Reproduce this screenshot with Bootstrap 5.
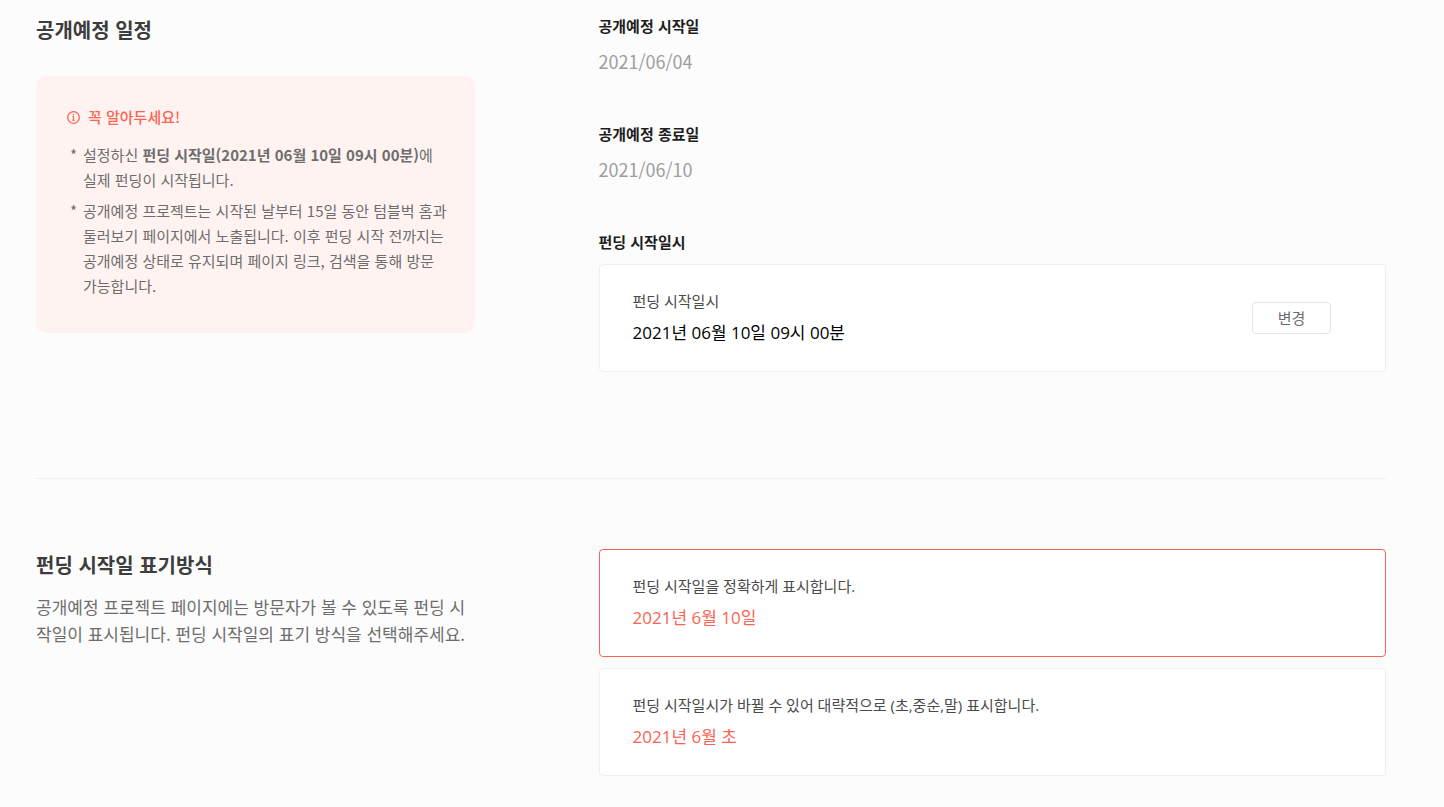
<!DOCTYPE html>
<html lang="ko">
<head>
<meta charset="utf-8">
<meta name="viewport" content="width=device-width, initial-scale=1">
<title>공개예정 일정</title>
<link href="https://cdn.jsdelivr.net/npm/bootstrap@5.3.0/dist/css/bootstrap.min.css" rel="stylesheet">
<style>
  :root { --accent: #fa6454; }
  body { background: #fcfcfc; color: #3d3d3d; font-family: "Noto Sans CJK KR", sans-serif; font-size: 15px; line-height: 24px; }
  .page { padding: 14px 58px 31px 36px; }
  .side { padding-right: 124px; }
  .section-title { font-size: 20px; line-height: 32px; font-weight: 700; color: #3d3d3d; }
  .notice { margin-top: 30px; padding: 29px 18px 35px 31px; background: #fff3f2; border-radius: 10px; color: #6d6d6d; word-break: keep-all; }
  .notice-title { color: var(--accent); font-size: 15px; line-height: 24px; font-weight: 500; gap: 8px; margin-bottom: 13px; }
  .notice-list { gap: 6px; line-height: 25px; }
  .notice-list li { padding-left: 16px; position: relative; }
  .notice-list li::before { content: "*"; position: absolute; left: 3px; }
  .field-label { font-size: 15px; line-height: 24px; font-weight: 700; color: #1e1e1e; margin-bottom: 10px; }
  .field-date { font-size: 18px; line-height: 26px; color: #9e9e9e; margin-bottom: 48px; }
  .panel { background: #fff; border: 1px solid #efefef; border-radius: 4px; padding: 24px 54px 24px 33px; font-family: "Open Sans", "Noto Sans CJK KR", sans-serif; }
  .panel-text { color: #4a4a4a; margin-bottom: 6px; }
  .panel-date { font-size: 17px; line-height: 28px; color: #000; }
  .change-btn { width: 79px; height: 32px; padding: 0; font-size: 15px; line-height: 24px; background: #fff; border: 1px solid #e4e4e4; border-radius: 4px; color: #6d6d6d; }
  .divider { margin: 106px 0 70px; border-top: 1px solid #f0f0f0; opacity: 1; }
  .description { font-size: 17px; line-height: 27px; color: #6d6d6d; margin-top: 12px; padding-right: 4px; }
  .choices { gap: 11px; }
  .choice { cursor: pointer; position: relative; }
  .choice .panel-date { color: var(--accent); }
  .choice:has(input:checked) { border-color: var(--accent); }
</style>
</head>
<body>
<main class="page">
  <section class="row g-0">
    <div class="col-5 side">
      <h2 class="section-title mb-0">공개예정 일정</h2>
      <aside class="notice">
        <h3 class="notice-title d-flex align-items-center">
          <svg width="13" height="13" viewBox="0 0 13 13" fill="none" stroke="currentColor" aria-hidden="true">
            <circle cx="6.5" cy="6.5" r="5.8" stroke-width="1.3"/>
            <path d="M5.3 5.7h1.2v3.4M5.1 9.3h2.8" stroke-width="1.1"/>
            <circle cx="6.5" cy="3.7" r=".8" fill="currentColor" stroke="none"/>
          </svg>
          <span>꼭 알아두세요!</span>
        </h3>
        <ul class="notice-list list-unstyled d-flex flex-column mb-0">
          <li>설정하신 <strong>펀딩 시작일(2021년 06월 10일 09시 00분)</strong>에 실제 펀딩이 시작됩니다.</li>
          <li>공개예정 프로젝트는 시작된 날부터 15일 동안 텀블벅 홈과 둘러보기 페이지에서 노출됩니다. 이후 펀딩 시작 전까지는 공개예정 상태로 유지되며 페이지 링크, 검색을 통해 방문 가능합니다.</li>
        </ul>
      </aside>
    </div>
    <div class="col-7">
      <h3 class="field-label">공개예정 시작일</h3>
      <p class="field-date">2021/06/04</p>
      <h3 class="field-label">공개예정 종료일</h3>
      <p class="field-date">2021/06/10</p>
      <h3 class="field-label">펀딩 시작일시</h3>
      <div class="panel d-flex align-items-center justify-content-between">
        <div>
          <p class="panel-text">펀딩 시작일시</p>
          <p class="panel-date mb-0">2021년 06월 10일 09시 00분</p>
        </div>
        <button type="button" class="btn change-btn">변경</button>
      </div>
    </div>
  </section>

  <hr class="divider">

  <section class="row g-0">
    <div class="col-5 side">
      <h2 class="section-title mb-0">펀딩 시작일 표기방식</h2>
      <p class="description mb-0">공개예정 프로젝트 페이지에는 방문자가 볼 수 있도록 펀딩 시작일이 표시됩니다. 펀딩 시작일의 표기 방식을 선택해주세요.</p>
    </div>
    <div class="col-7 d-flex flex-column choices">
      <label class="panel choice d-block">
        <input type="radio" class="visually-hidden" name="dateFormat" value="exact" checked>
        <span class="panel-text d-block">펀딩 시작일을 정확하게 표시합니다.</span>
        <span class="panel-date d-block">2021년 6월 10일</span>
      </label>
      <label class="panel choice d-block">
        <input type="radio" class="visually-hidden" name="dateFormat" value="rough">
        <span class="panel-text d-block">펀딩 시작일시가 바뀔 수 있어 대략적으로 (초,중순,말) 표시합니다.</span>
        <span class="panel-date d-block">2021년 6월 초</span>
      </label>
    </div>
  </section>
</main>
<script src="https://cdn.jsdelivr.net/npm/bootstrap@5.3.0/dist/js/bootstrap.bundle.min.js"></script>
</body>
</html>
